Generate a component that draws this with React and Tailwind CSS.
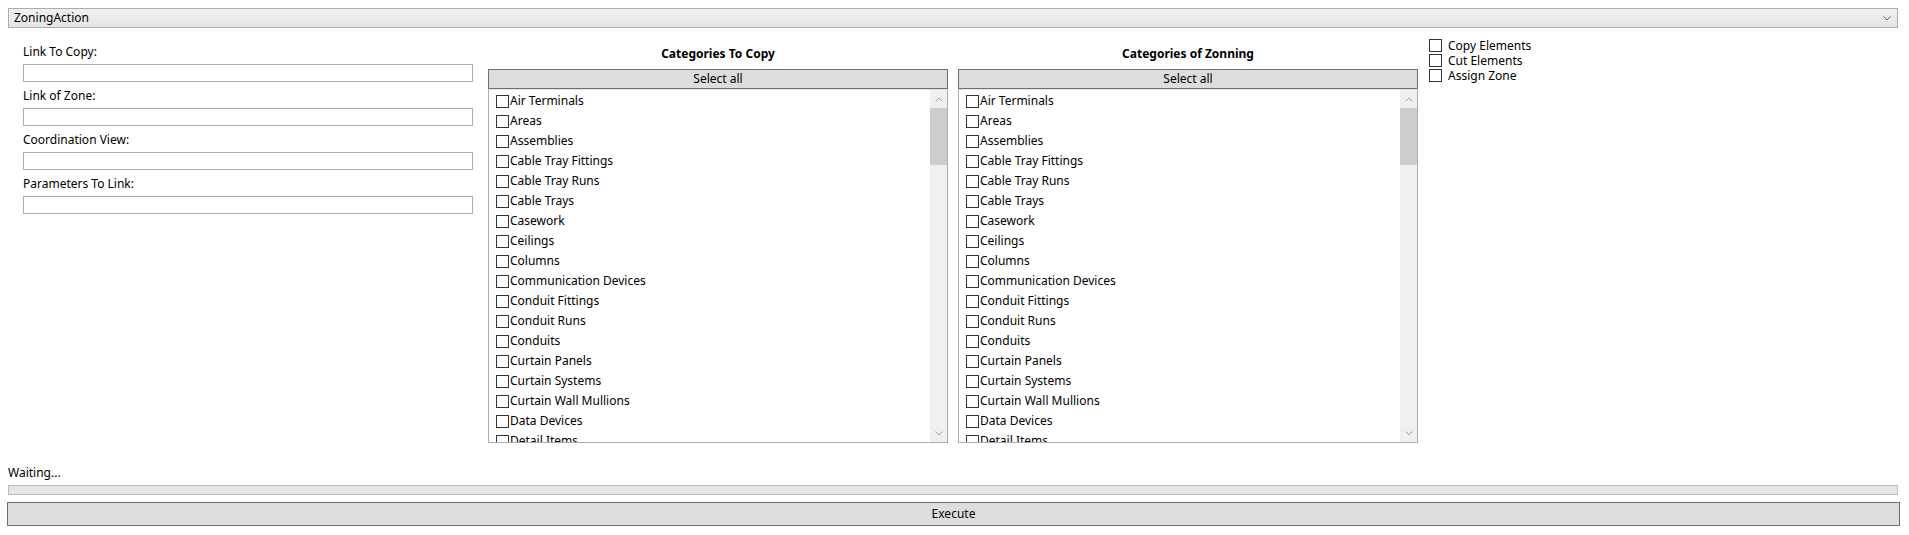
import React from "react";

const categories = [
  "Air Terminals",
  "Areas",
  "Assemblies",
  "Cable Tray Fittings",
  "Cable Tray Runs",
  "Cable Trays",
  "Casework",
  "Ceilings",
  "Columns",
  "Communication Devices",
  "Conduit Fittings",
  "Conduit Runs",
  "Conduits",
  "Curtain Panels",
  "Curtain Systems",
  "Curtain Wall Mullions",
  "Data Devices",
  "Detail Items",
  "Doors",
];

const fields = ["Link To Copy:", "Link of Zone:", "Coordination View:", "Parameters To Link:"];

function Box() {
  return <span className="block w-[13px] h-[13px] border border-[#333333] bg-white shrink-0" />;
}

function Chevron({ up, color = "#a0a0a0" }) {
  return (
    <svg width="8" height="5" viewBox="0 0 8 5" className="block">
      <path
        d={up ? "M0.5 4.5 L4 1 L7.5 4.5" : "M0.5 0.5 L4 4 L7.5 0.5"}
        fill="none"
        stroke={color}
        strokeWidth="1"
      />
    </svg>
  );
}

function CategoryList({ title }) {
  return (
    <div className="w-[460px] flex flex-col">
      <div className="h-[30px] flex items-center justify-center font-bold text-[12px] text-black">
        {title}
      </div>
      <button className="h-[20px] w-full border border-[#707070] bg-[#dddddd] text-[12px] text-black flex items-center justify-center">
        Select all
      </button>
      <div className="h-[354px] border border-[#abadb3] border-t-[#e3e3e3] bg-white flex overflow-hidden">
        <div className="flex-1 pl-[7px] pt-[1px] overflow-hidden">
          {categories.map((c) => (
            <div key={c} className="h-[20px] flex items-center">
              <Box />
              <span className="ml-[1px] text-[12px] text-black leading-none">{c}</span>
            </div>
          ))}
        </div>
        <div className="w-[17px] bg-[#f0f0f0] flex flex-col">
          <div className="h-[18px] flex items-center justify-center">
            <Chevron up />
          </div>
          <div className="h-[57px] bg-[#cdcdcd]" />
          <div className="flex-1" />
          <div className="h-[18px] flex items-center justify-center">
            <Chevron />
          </div>
        </div>
      </div>
    </div>
  );
}

export default function App() {
  return (
    <div
      className="w-[1909px] h-[535px] bg-white flex flex-col text-black overflow-hidden"
      style={{ fontFamily: "'Segoe UI', 'Noto Sans', sans-serif" }}
    >
      {/* Combo */}
      <div className="mt-[8px] ml-[8px] w-[1890px] h-[20px] border border-[#acacac] bg-gradient-to-b from-[#f0f0f0] to-[#e5e5e5] flex items-center justify-between pl-[5px] pr-[6px]">
        <span className="text-[12px]">ZoningAction</span>
        <Chevron color="#606060" />
      </div>

      {/* Main */}
      <div className="h-[415px] flex">
        <div className="ml-[23px] mt-[10px] w-[450px] flex flex-col">
          {fields.map((f) => (
            <div key={f}>
              <div className="h-[26px] pt-[2px] flex items-center text-[12px]">{f}</div>
              <div className="h-[18px] border border-[#abadb3] bg-white" />
            </div>
          ))}
        </div>

        <div className="ml-[15px] mt-[11px]">
          <CategoryList title="Categories To Copy" />
        </div>
        <div className="ml-[10px] mt-[11px]">
          <CategoryList title="Categories of Zonning" />
        </div>

        <div className="ml-[11px] mt-[10px] flex flex-col">
          {["Copy Elements", "Cut Elements", "Assign Zone"].map((t) => (
            <div key={t} className="h-[15px] flex items-center">
              <Box />
              <span className="ml-[6px] text-[12px] leading-none">{t}</span>
            </div>
          ))}
        </div>
      </div>

      {/* Bottom */}
      <div className="mt-[20px] h-[20px] pl-[8px] flex items-center text-[12px]">Waiting...</div>
      <div className="mt-[2px] ml-[8px] w-[1890px] h-[10px] border border-[#bcbcbc] bg-[#e6e6e6]" />
      <button className="mt-[7px] ml-[7px] w-[1893px] h-[24px] border border-[#707070] bg-[#dddddd] text-[12px] flex items-center justify-center">
        Execute
      </button>
    </div>
  );
}
